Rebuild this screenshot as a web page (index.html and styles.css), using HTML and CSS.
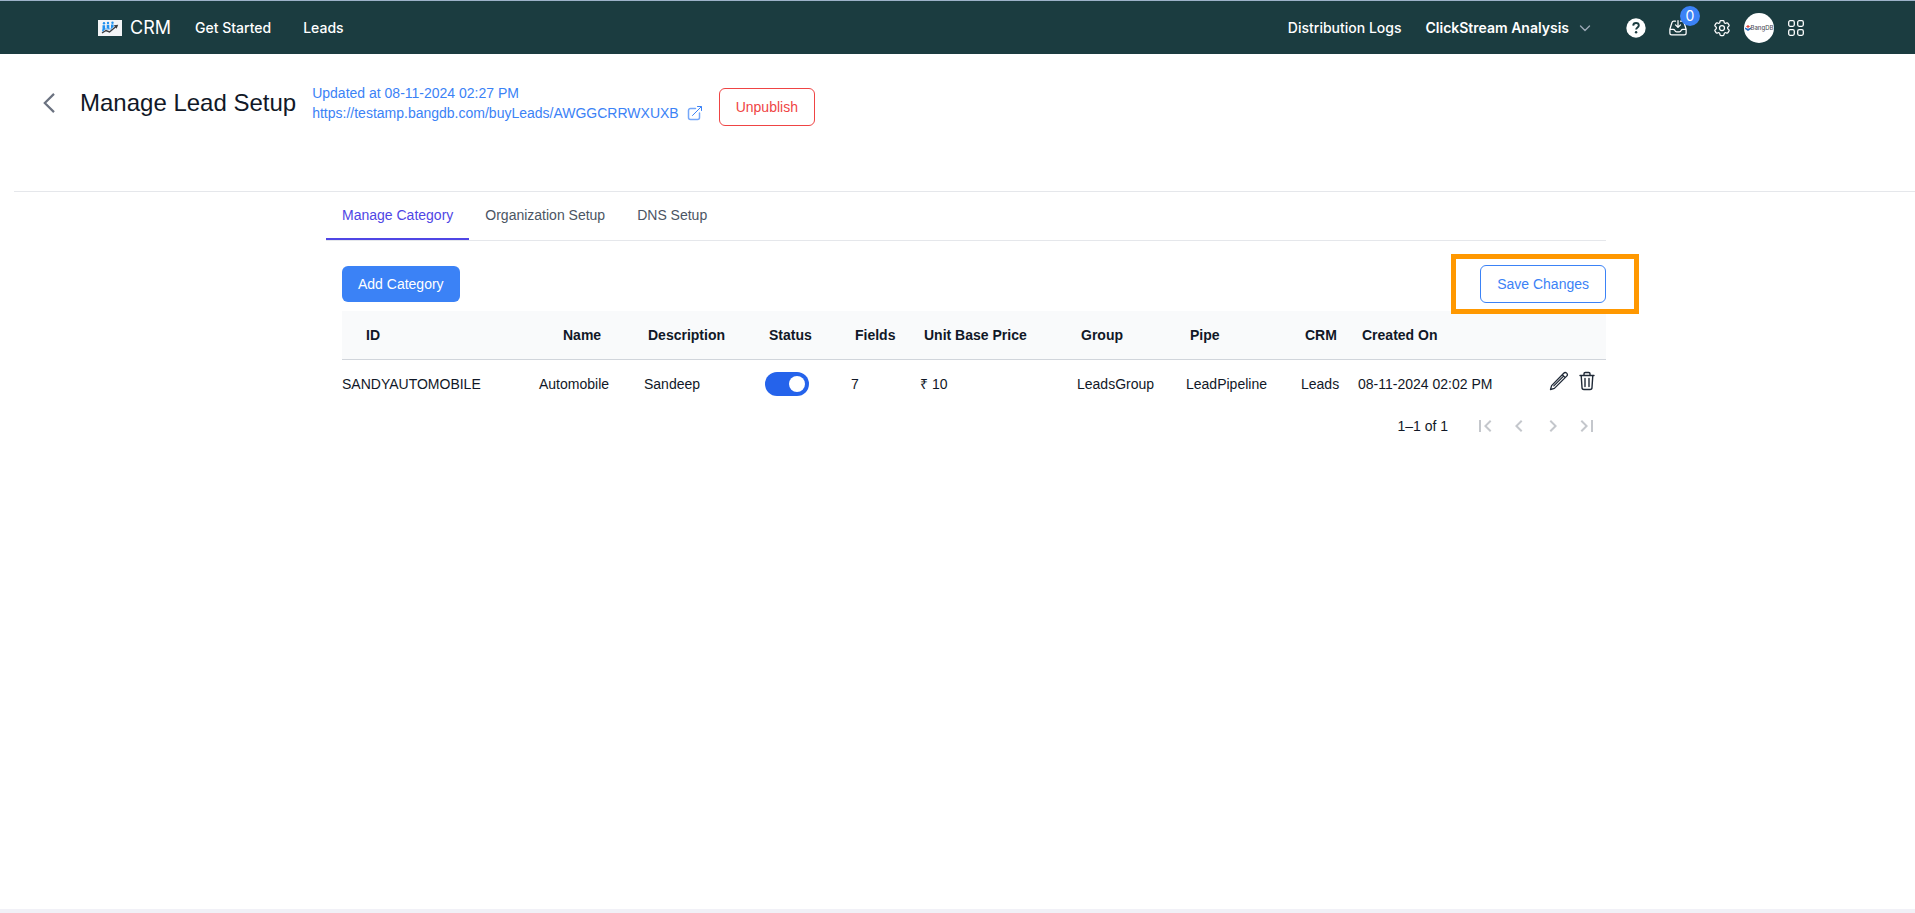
FILE: index.html
```html
<!DOCTYPE html>
<html lang="en">
<head>
<meta charset="utf-8">
<title>Manage Lead Setup</title>
<link rel="stylesheet" href="styles.css">
</head>
<body>
<header class="topbar">
  <a class="brand" href="#">
    <svg class="brand-logo" width="24" height="16" viewBox="0 0 24 16" aria-hidden="true"><rect width="24" height="16" fill="#f3f4f6"/><g fill="#1e90f0"><circle cx="6" cy="3.300" r="1.200"/><circle cx="10" cy="2.900" r="1.200"/><circle cx="14.500" cy="2.700" r="1.200"/><path d="M4.500 5.200h2.600v4.300l-2.600 1.500zM8.700 4.700h2.600V9l-2.600-.7zM13 4.500h2.600V7L13 8.800z"/><path d="M4 9.500h2v2H4zM7 8.500h7v1H7z" opacity=".7"/></g><path d="M4 13 8 10.500l3.500 1.500L18 6.500" fill="none" stroke="#3c3c40" stroke-width="1.400"/><path d="m15.800 5.200 4.400-.4-1.600 3.900z" fill="#3c3c40"/></svg>
    <span>CRM</span>
  </a>
  <nav class="nav-main" aria-label="Main">
    <a href="#">Get Started</a>
    <a href="#">Leads</a>
  </nav>
  <div class="nav-side">
    <a class="logs" href="#">Distribution Logs</a>
    <button class="dropdown" type="button">ClickStream Analysis
      <svg width="12" height="12" viewBox="0 0 12 12" fill="none" stroke="#9aa7b4" stroke-width="1.400" stroke-linecap="round" stroke-linejoin="round" aria-hidden="true"><path d="m1.500 4 4.500 4.500L10.500 4"/></svg>
    </button>
    <div class="tools">
      <button class="icon-btn" type="button" aria-label="Help"><svg width="20" height="20" viewBox="0 0 20 20" aria-hidden="true"><circle cx="10" cy="10" r="9.700" fill="#fff"/><path d="M7.200 7.600C7.300 5.900 8.500 5 10 5s2.800.9 2.800 2.400c0 2-2.700 2-2.700 4.100" fill="none" stroke="#1b3c40" stroke-width="1.900"/><circle cx="10.100" cy="14.200" r="1.200" fill="#1b3c40"/></svg></button>
      <button class="icon-btn inbox" type="button" aria-label="Inbox"><svg width="20" height="20" viewBox="0 0 24 24" fill="none" stroke="#fff" stroke-width="1.500" stroke-linecap="round" stroke-linejoin="round" aria-hidden="true"><path d="M9 3.750H6.912a2.250 2.250 0 0 0-2.150 1.588L2.350 13.177a2.250 2.250 0 0 0-.1.661V18a2.250 2.250 0 0 0 2.250 2.250h15A2.250 2.250 0 0 0 21.750 18v-4.162c0-.224-.034-.447-.1-.661L19.240 5.338a2.250 2.250 0 0 0-2.150-1.588H15M2.250 13.500h3.860a2.250 2.250 0 0 1 2.012 1.244l.256.512a2.250 2.250 0 0 0 2.013 1.244h3.218a2.250 2.250 0 0 0 2.013-1.244l.256-.512a2.250 2.250 0 0 1 2.013-1.244h3.859M12 3v8.250m0 0-3-3m3 3 3-3"/></svg><span class="badge">0</span></button>
      <button class="icon-btn gear" type="button" aria-label="Settings"><svg width="20" height="20" viewBox="0 0 24 24" fill="none" stroke="#fff" stroke-width="1.500" stroke-linecap="round" stroke-linejoin="round" aria-hidden="true"><path d="M9.594 3.940c.09-.542.560-.940 1.110-.940h2.593c.550 0 1.020.398 1.110.940l.213 1.281c.063.374.313.686.645.870.074.040.147.083.220.127.325.196.720.257 1.075.124l1.217-.456a1.125 1.125 0 0 1 1.370.490l1.296 2.247a1.125 1.125 0 0 1-.260 1.431l-1.003.827c-.293.241-.438.613-.430.992a7.723 7.723 0 0 1 0 .255c-.008.378.137.750.430.991l1.004.827c.424.350.534.955.260 1.430l-1.298 2.247a1.125 1.125 0 0 1-1.369.491l-1.217-.456c-.355-.133-.750-.072-1.076.124a6.470 6.470 0 0 1-.220.128c-.331.183-.581.495-.644.869l-.213 1.281c-.090.543-.560.940-1.110.940h-2.594c-.550 0-1.019-.398-1.110-.940l-.213-1.281c-.062-.374-.312-.686-.644-.870a6.520 6.520 0 0 1-.220-.127c-.325-.196-.720-.257-1.076-.124l-1.217.456a1.125 1.125 0 0 1-1.369-.490l-1.297-2.247a1.125 1.125 0 0 1 .260-1.431l1.004-.827c.292-.240.437-.613.430-.991a6.932 6.932 0 0 1 0-.255c.007-.380-.138-.751-.430-.992l-1.004-.827a1.125 1.125 0 0 1-.260-1.430l1.297-2.247a1.125 1.125 0 0 1 1.370-.491l1.216.456c.356.133.751.072 1.076-.124.072-.044.146-.086.220-.128.332-.183.582-.495.644-.869l.214-1.280Z"/><circle cx="12" cy="12" r="3"/></svg></button>
      <button class="avatar" type="button" aria-label="Account"><svg width="6" height="6" viewBox="0 0 6 6" aria-hidden="true"><path d="m3 0 2 1.500-2 1.500-2-1.500z" fill="#e0483e"/><path d="m0 2.500 3 1.300 3-1.300v1.500L3 6 0 4z" fill="#2c6fc4"/></svg><span>BangDB</span></button>
      <button class="icon-btn grid" type="button" aria-label="Apps"><svg width="16" height="16" viewBox="0 0 16 16" fill="none" stroke="#fff" stroke-width="1.300" aria-hidden="true"><rect x=".7" y=".7" width="5.600" height="5.600" rx="1.500"/><rect x="9.700" y=".7" width="5.600" height="5.600" rx="1.500"/><rect x=".7" y="9.700" width="5.600" height="5.600" rx="1.500"/><rect x="9.700" y="9.700" width="5.600" height="5.600" rx="1.500"/></svg></button>
    </div>
  </div>
</header>

<main class="page">
  <section class="page-head">
    <button class="back" type="button" aria-label="Back"><svg width="12" height="20" viewBox="0 0 12 20" fill="none" stroke="#6b7280" stroke-width="2.200" aria-hidden="true"><path d="M11 .9 1.800 10l9.200 9.100"/></svg></button>
    <h1>Manage Lead Setup</h1>
    <div class="publish-info">
      <div>Updated at 08-11-2024 02:27 PM</div>
      <a href="#">https://testamp.bangdb.com/buyLeads/AWGGCRRWXUXB
        <svg width="16" height="16" viewBox="0 0 16 16" fill="none" stroke="#3b82f6" stroke-linecap="round" stroke-linejoin="round" aria-hidden="true"><path d="M8.500 3.500H3.500A2 2 0 0 0 1.500 5.500v7a2 2 0 0 0 2 2h7a2 2 0 0 0 2-2V8" stroke-width="1.500" opacity=".7"/><path d="M5.500 10.500 14.200 1.800M10.500 1.500h4v4"/></svg></a>
    </div>
    <button class="btn btn-danger" type="button">Unpublish</button>
  </section>

  <div class="content">
    <div class="tabs" role="tablist">
      <button class="tab active" type="button" role="tab" aria-selected="true">Manage Category</button>
      <button class="tab" type="button" role="tab" aria-selected="false">Organization Setup</button>
      <button class="tab" type="button" role="tab" aria-selected="false">DNS Setup</button>
    </div>
    <section class="panel">
      <div class="actions">
        <button class="btn btn-primary" type="button">Add Category</button>
        <div class="highlighted"><button class="btn btn-outline" type="button">Save Changes</button></div>
      </div>
      <table class="categories">
        <colgroup><col class="c-id"><col class="c-name"><col class="c-desc"><col class="c-status"><col class="c-fields"><col class="c-price"><col class="c-group"><col class="c-pipe"><col class="c-crm"><col class="c-created"><col></colgroup>
        <thead>
          <tr><th class="wide">ID</th><th class="wide">Name</th><th>Description</th><th>Status</th><th>Fields</th><th>Unit Base Price</th><th>Group</th><th>Pipe</th><th>CRM</th><th>Created On</th><th aria-label="Actions"></th></tr>
        </thead>
        <tbody>
          <tr><td>SANDYAUTOMOBILE</td><td>Automobile</td><td>Sandeep</td><td><input class="switch" type="checkbox" checked aria-label="Status"></td><td>7</td><td>₹ 10</td><td>LeadsGroup</td><td>LeadPipeline</td><td>Leads</td><td>08-11-2024 02:02 PM</td>
          <td><div class="row-actions">
            <button class="icon-btn" type="button" aria-label="Edit"><svg width="20" height="20" viewBox="0 0 20 20" fill="none" stroke="#1f2937" stroke-width="1.300" stroke-linecap="round" stroke-linejoin="round" aria-hidden="true"><path d="M1.500 18.500 2.600 14.600 14.700 2.200a2 2 0 0 1 3 2.900L5.400 17.400zM13.300 3.700l2.900 2.900M4.800 14.900 14.600 5.100"/></svg></button>
            <button class="icon-btn" type="button" aria-label="Delete"><svg width="16" height="20" viewBox="0 0 16 20" fill="none" stroke="#1f2937" stroke-width="1.400" stroke-linecap="round" stroke-linejoin="round" aria-hidden="true"><path d="M1 4.500h14M5 4.200V2.800a1.300 1.300 0 0 1 1.300-1.300h3.400A1.300 1.300 0 0 1 11 2.800v1.400M2.200 4.500l.8 12a2 2 0 0 0 2 2h6a2 2 0 0 0 2-2l.8-12M6 7.500v8M10 7.500v8"/></svg></button>
          </div></td></tr>
        </tbody>
      </table>
      <div class="pager">
        <span>1–1 of 1</span>
        <div class="pager-buttons">
          <button type="button" aria-label="First page" disabled><svg width="24" height="24" viewBox="0 0 24 24" aria-hidden="true"><path d="M18.410 16.590 13.820 12l4.590-4.590L17 6l-6 6 6 6zM6 6h2v12H6z"/></svg></button>
          <button type="button" aria-label="Previous page" disabled><svg width="24" height="24" viewBox="0 0 24 24" aria-hidden="true"><path d="M15.410 16.590 10.830 12l4.580-4.590L14 6l-6 6 6 6z"/></svg></button>
          <button type="button" aria-label="Next page" disabled><svg width="24" height="24" viewBox="0 0 24 24" aria-hidden="true"><path d="M8.590 16.590 13.170 12 8.590 7.410 10 6l6 6-6 6z"/></svg></button>
          <button type="button" aria-label="Last page" disabled><svg width="24" height="24" viewBox="0 0 24 24" aria-hidden="true"><path d="M5.590 7.410 10.180 12l-4.590 4.590L7 18l6-6-6-6zM16 6h2v12h-2z"/></svg></button>
        </div>
      </div>
    </section>
  </div>
</main>
<footer class="bottom-strip"></footer>
</body>
</html>
```

FILE: styles.css
```css
* { box-sizing: border-box; }

body {
  margin: 0;
  min-height: 100vh;
  display: flex;
  flex-direction: column;
  background: #fff;
  color: #111827;
  font: 14px/20px "Liberation Sans", Arial, sans-serif;
}

button {
  padding: 0;
  border: 0;
  background: none;
  color: inherit;
  font: inherit;
  cursor: pointer;
}

a { color: inherit; text-decoration: none; }
svg { display: block; flex: none; }

/* Top bar */
.topbar {
  display: flex;
  align-items: center;
  height: 54px;
  padding: 0 111px 0 98px;
  border-top: 1px solid #9db2c9;
  background: #1b3c40;
  color: #fff;
  font: 500 14px/20px Inter, sans-serif;
}
.brand { display: flex; align-items: center; gap: 8px; font-size: 18px; font-weight: 400; }
.nav-main { display: flex; gap: 32px; margin-left: 24px; }
.nav-side { display: flex; align-items: center; margin-left: auto; }
.logs { margin-right: 24px; }
.dropdown { display: flex; align-items: center; gap: 10px; font-weight: 600; }
.tools { display: flex; align-items: center; margin-left: 35px; }
.icon-btn { display: block; position: relative; }
.inbox { margin-left: 22px; }
.gear { margin-left: 24px; }
.grid { margin-left: 14px; }
.badge {
  position: absolute;
  left: 12px;
  top: -12px;
  width: 20px;
  border-radius: 50%;
  background: #3b82f6;
  font-size: 14px;
  font-weight: 400;
  text-align: center;
}
.avatar {
  display: flex;
  align-items: center;
  justify-content: center;
  width: 30px;
  height: 30px;
  margin-left: 12px;
  border-radius: 50%;
  background: #fff;
  color: #55565e;
  font-size: 6px;
  font-weight: 500;
}

/* Page heading */
.page { flex: 1; padding-left: 14px; }
.page-head {
  display: flex;
  align-items: flex-start;
  padding: 29px 0 65px 29px;
  border-bottom: 1px solid #e5e7eb;
}
.back { margin-top: 10px; }
h1 { margin: 4px 16px 0 25px; font-size: 24px; font-weight: 400; line-height: 32px; }
.publish-info { color: #3b82f6; }
.publish-info a { display: flex; align-items: center; gap: 8px; }
.btn { height: 36px; padding: 0 16px; border-radius: 6px; }
.btn-primary { background: #3b82f6; color: #fff; }
.btn-outline { height: 38px; border: 1px solid #3b82f6; background: #fff; color: #3b82f6; }
.btn-danger { height: 38px; margin: 5px 0 0 16px; border: 1px solid #ef4444; background: #fff; color: #ef4444; }

/* Tabs */
.content { max-width: 1283px; margin: 0 auto; padding-left: 3px; }
.tabs { display: flex; border-bottom: 1px solid #e5e7eb; }
.tab { height: 48px; padding: 0 16px; border-bottom: 2px solid transparent; color: #4b5563; }
.tab.active { border-color: #4f46e5; color: #4f46e5; }

/* Category table */
.panel { padding: 24px 0 0 16px; }
.actions { display: flex; align-items: center; justify-content: space-between; margin-bottom: 8px; }
.highlighted { position: relative; }
.highlighted::after {
  content: "";
  position: absolute;
  inset: -11px -33px -11px -29px;
  border: 5px solid #ff9800;
  pointer-events: none;
}
.categories { width: 100%; table-layout: fixed; border-collapse: separate; border-spacing: 0; }
.c-id { width: 197px; }
.c-name { width: 105px; }
.c-desc { width: 121px; }
.c-status { width: 86px; }
.c-fields { width: 69px; }
.c-price { width: 157px; }
.c-group { width: 109px; }
.c-pipe { width: 115px; }
.c-crm { width: 57px; }
.c-created { width: 191px; }
th, td { height: 48px; padding: 0; text-align: left; white-space: nowrap; }
th { height: 49px; padding-left: 4px; border-bottom: 1px solid #d1d5db; background: #f9fafb; }
th.wide { padding-left: 24px; }
.switch {
  display: block;
  appearance: none;
  width: 44px;
  height: 24px;
  margin: 0;
  padding: 4px;
  border-radius: 12px;
  background: #9ca3af;
}
.switch::before { content: ""; display: block; width: 16px; height: 16px; border-radius: 50%; background: #fff; }
.switch:checked { background: #2563eb; }
.switch:checked::before { margin-left: auto; }
.row-actions { display: flex; gap: 10px; padding-bottom: 6px; }
.pager { display: flex; align-items: center; justify-content: flex-end; gap: 20px; padding-right: 2px; }
.pager-buttons { display: flex; }
.pager-buttons button { padding: 6px 5px; cursor: default; }
.pager-buttons svg { fill: #c4c7cc; }

.bottom-strip { height: 4px; background: #f1f1f7; }
```
